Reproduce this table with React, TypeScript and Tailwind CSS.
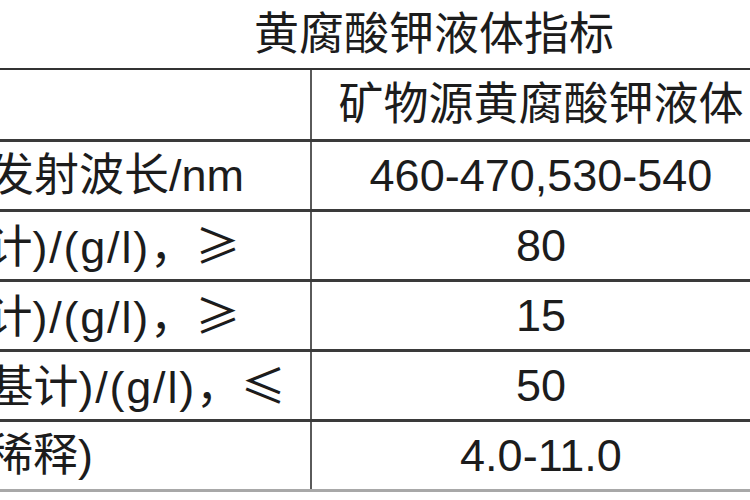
import React from "react";

const CJK = "font-['Noto_Sans_CJK_SC',sans-serif]";
const LAT = "tracking-[1.8px]";

type Row = { left: React.ReactNode; pr: string; right: string };

export default function App() {
  const rows: Row[] = [
    { left: <span>最大发射波长/nm</span>, pr: "pr-[66px]", right: "460-470,530-540" },
    {
      left: (
        <span>
          黄腐酸(以干基计<span className={LAT}>)/(g/l)</span>
          <span className={CJK}>，≥</span>
        </span>
      ),
      pr: "pr-[70px]",
      right: "80",
    },
    {
      left: (
        <span>
          氧化钾(以K₂O计<span className={LAT}>)/(g/l)</span>
          <span className={CJK}>，≥</span>
        </span>
      ),
      pr: "pr-[70px]",
      right: "15",
    },
    {
      left: (
        <span>
          水不溶物(以干基计<span className={LAT}>)/(g/l)</span>
          <span className={CJK}>，≤</span>
        </span>
      ),
      pr: "pr-[24px]",
      right: "50",
    },
    { left: <span>pH值(1:250倍稀释)</span>, pr: "pr-[217px]", right: "4.0-11.0" },
  ];

  return (
    <div className="w-[750px] h-[500px] overflow-hidden bg-white text-[#1c1c1c] font-['Liberation_Sans','Noto_Sans_CJK_SC',sans-serif] text-[45px] leading-none">
      <div className="w-[770px]">
        <div className="h-[68px] flex items-center pl-[254px] whitespace-nowrap">
          黄腐酸钾液体指标
        </div>
        <div className="flex h-[71px] border-t-2 border-[#333]">
          <div className="w-[312px] border-r-2 border-[#5a5a5a]" />
          <div className="flex-1 flex items-center justify-center whitespace-nowrap">
            矿物源黄腐酸钾液体
          </div>
        </div>
        {rows.map((r, i) => (
          <div key={i} className="flex h-[70px] border-t-[3px] border-[#3a3a3a]">
            <div
              className={`w-[312px] border-r-2 border-[#5a5a5a] flex items-center justify-end overflow-hidden whitespace-nowrap ${r.pr}`}
            >
              <div className="shrink-0">{r.left}</div>
            </div>
            <div className="flex-1 flex items-center justify-center whitespace-nowrap">
              {r.right}
            </div>
          </div>
        ))}
        <div className="border-t-[3px] border-[#a8a8a8]" />
      </div>
    </div>
  );
}
